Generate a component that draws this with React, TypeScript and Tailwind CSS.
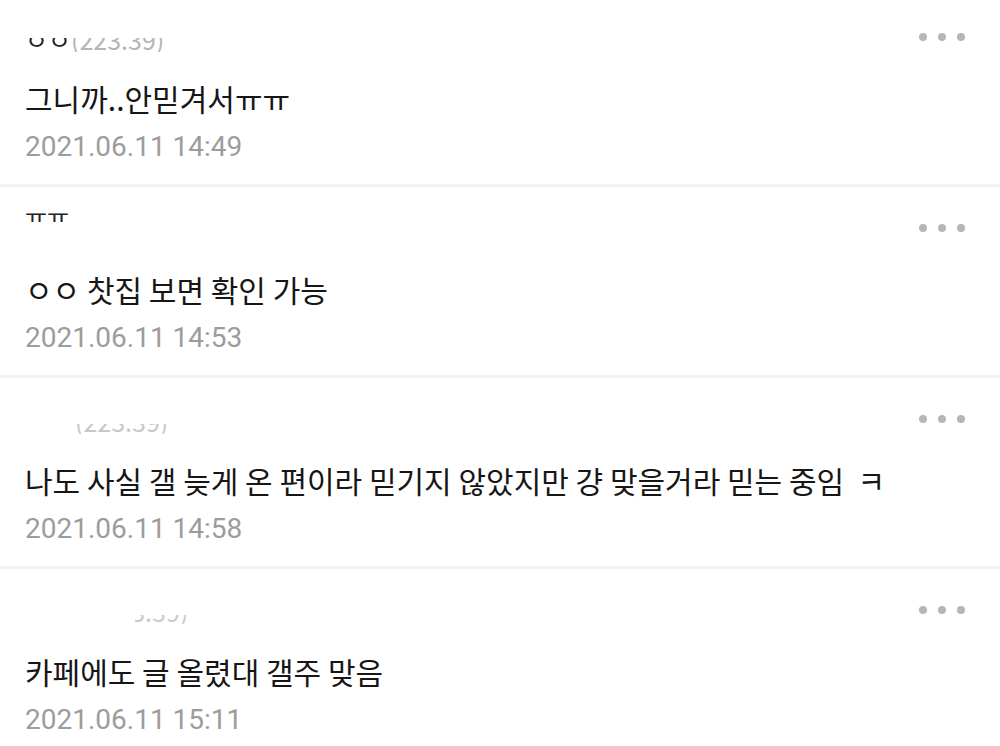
import type { ReactNode } from 'react'

interface Comment {
  id: number
  header: ReactNode
  text: string
  date: string
}

// the nicknames are partly blanked out in the source, so only slices of them show
const comments: Comment[] = [
  {
    id: 1,
    header: (
      <div className="flex h-[38px]">
        <div className="mt-[20px] flex h-[14px] items-end overflow-hidden">
          <span className="text-[25px] leading-[25px] text-[#222]">ㅇㅇ</span>
          <span className="text-[25px] leading-[25px] text-[#b5b5b5]">(223.39)</span>
        </div>
      </div>
    ),
    text: '그니까..안믿겨서ㅠㅠ',
    date: '2021.06.11 14:49',
  },
  {
    id: 2,
    header: (
      <div className="flex h-[38px]">
        <div className="mt-[4px] h-[9px] overflow-hidden">
          <span className="-mt-[9px] block text-[24px] leading-[24px] text-[#222]">ㅠㅠ</span>
        </div>
      </div>
    ),
    text: 'ㅇㅇ 찻집 보면 확인 가능',
    date: '2021.06.11 14:53',
  },
  {
    id: 3,
    header: (
      <div className="flex h-[38px]">
        <span className="w-[50px]" />
        <div className="mt-[24px] flex h-[10px] items-end overflow-hidden">
          <span className="text-[25px] leading-[25px] text-[#c8c8c8]">(223.39)</span>
        </div>
      </div>
    ),
    text: '나도 사실 갤 늦게 온 편이라 믿기지 않았지만 걍 맞을거라 믿는 중임  ㅋ',
    date: '2021.06.11 14:58',
  },
  {
    id: 4,
    header: (
      <div className="flex h-[38px]">
        <span className="w-[110px]" />
        <div className="mt-[24px] flex h-[9px] w-[56px] items-end overflow-hidden">
          <span className="-ml-[40px] whitespace-nowrap text-[25px] leading-[25px] text-[#cbcbcb]">
            (223.39)
          </span>
        </div>
      </div>
    ),
    text: '카페에도 글 올렸대 갤주 맞음',
    date: '2021.06.11 15:11',
  },
]

function MoreDots() {
  return (
    <div className="flex items-center gap-[11px]">
      <span className="h-2 w-2 rounded-full bg-[#b6b6b6]" />
      <span className="h-2 w-2 rounded-full bg-[#b6b6b6]" />
      <span className="h-2 w-2 rounded-full bg-[#b6b6b6]" />
    </div>
  )
}

function CommentItem({ comment, last }: { comment: Comment; last: boolean }) {
  return (
    <div className={last ? '' : 'border-b-[3px] border-[#f2f2f2]'}>
      <div className="pl-[25px] pr-[35px] pt-[22px] pb-[20px]">
        <div className="flex items-start justify-between">
          <div className="flex-1">{comment.header}</div>
          <div className="flex h-[38px] items-center">
            <MoreDots />
          </div>
        </div>
        <p className="mt-[22px] h-[40px] whitespace-pre text-[30px] leading-[40px] text-[#161616]">
          {comment.text}
        </p>
        <p className="mt-[12px] h-[34px] font-['Roboto','Noto_Sans_CJK_KR',sans-serif] text-[28px] leading-[34px] text-[#9c9c9c]">
          {comment.date}
        </p>
      </div>
    </div>
  )
}

export default function App() {
  return (
    <div className="h-[746px] w-[1000px] overflow-hidden bg-white font-['Noto_Sans_CJK_KR','Noto_Sans',sans-serif]">
      <div className="-mt-[4px]">
        {comments.map((comment, index) => (
          <CommentItem
            key={comment.id}
            comment={comment}
            last={index === comments.length - 1}
          />
        ))}
      </div>
    </div>
  )
}
